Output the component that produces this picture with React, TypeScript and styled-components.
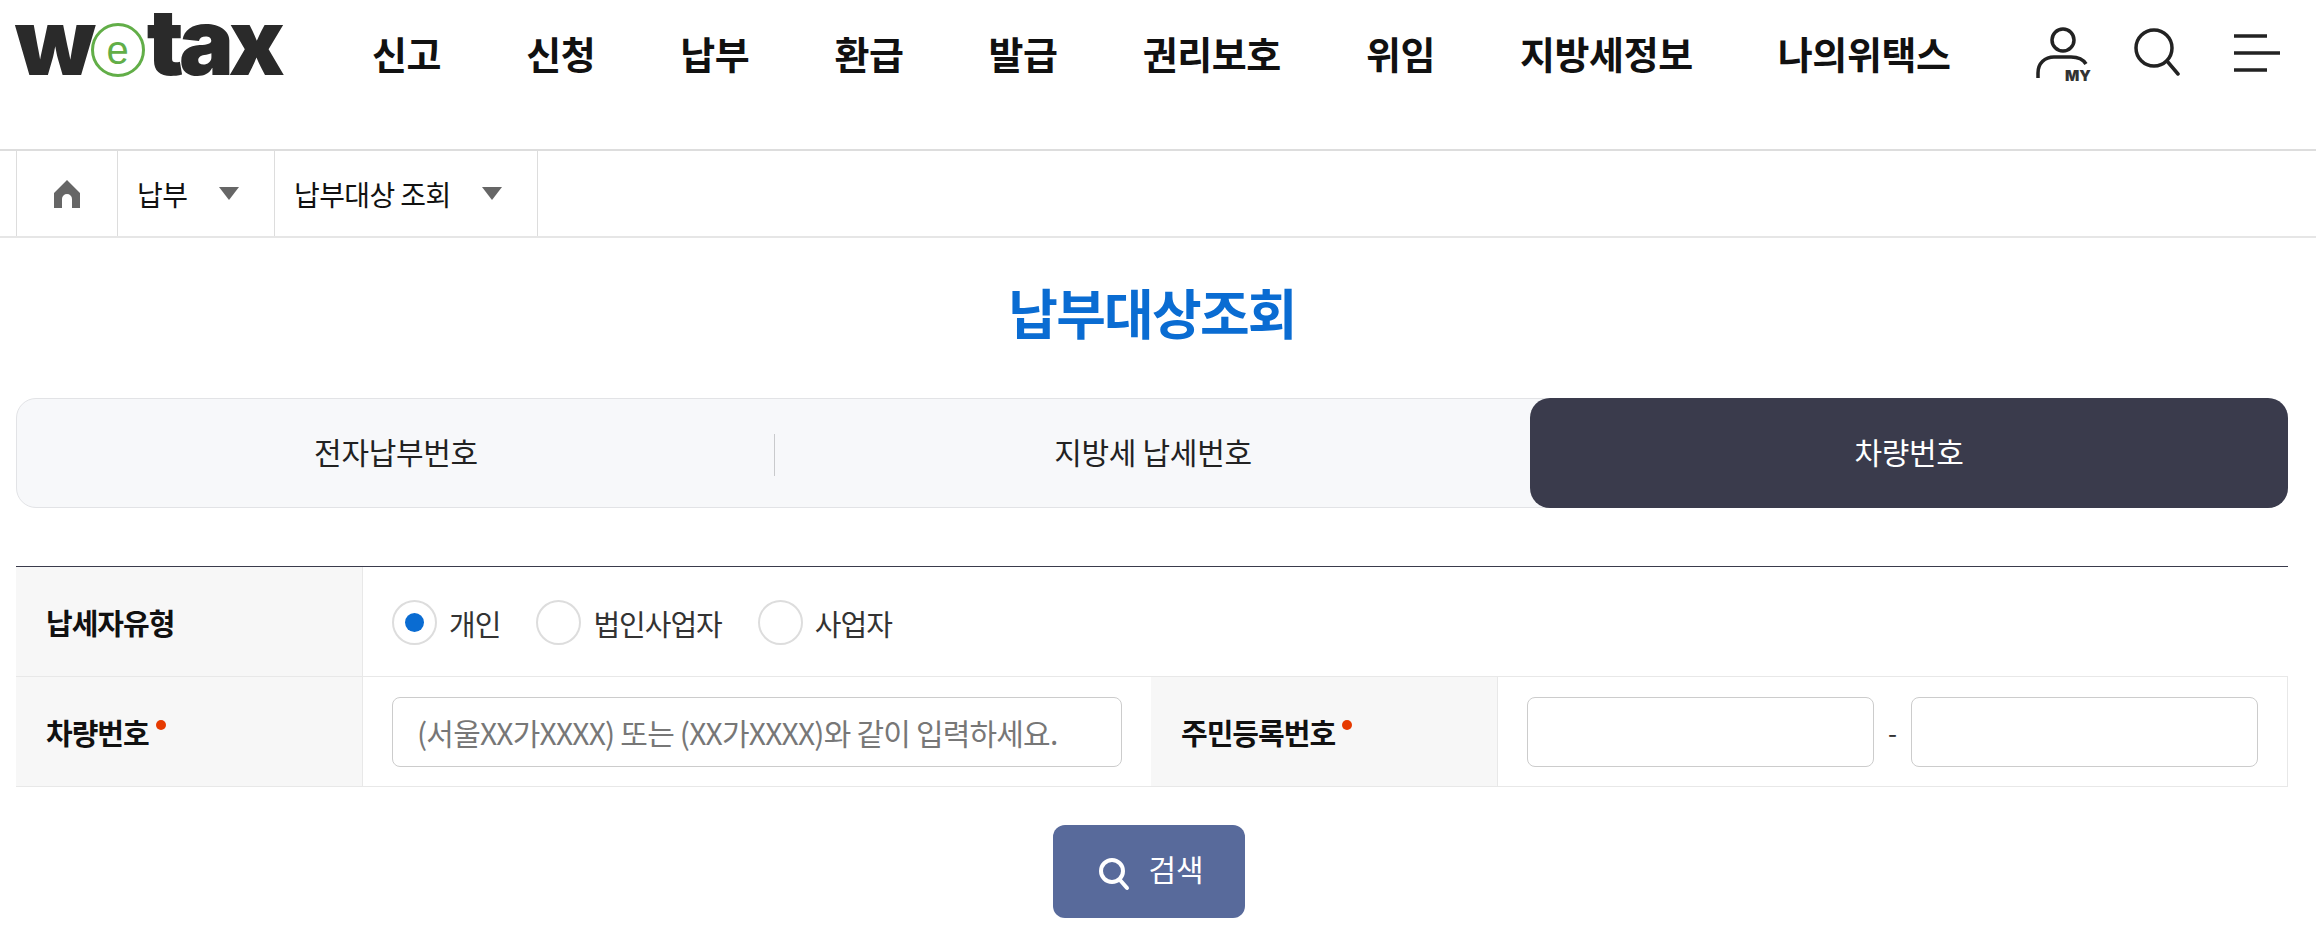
import React from "react";
import styled, { createGlobalStyle } from "styled-components";

const GlobalStyle = createGlobalStyle`
  html, body {
    margin: 0;
    padding: 0;
    background: #fff;
    font-family: "Noto Sans CJK KR", "Noto Sans", sans-serif;
    color: #111;
  }
  * { box-sizing: border-box; }
`;

const navItems = ["신고", "신청", "납부", "환급", "발급", "권리보호", "위임", "지방세정보", "나의위택스"];

const UserIcon = () => (
  <svg width="56" height="60" viewBox="0 0 56 60" fill="none">
    <circle cx="27" cy="13" r="11" stroke="#222" strokeWidth="3.5" />
    <path d="M2 51v-5c0-10 7-16 16-16h17c7 0 12 2 15 7" stroke="#222" strokeWidth="3.5" />
    <text x="29" y="54" fontSize="15" fontWeight="900" fontFamily="Inter, sans-serif" fill="#333">MY</text>
  </svg>
);

const SearchIcon = () => (
  <svg width="46" height="50" viewBox="0 0 46 50" fill="none">
    <circle cx="20" cy="21" r="18" stroke="#222" strokeWidth="3.5" />
    <path d="M33 34l11 13" stroke="#222" strokeWidth="3.5" strokeLinecap="round" />
  </svg>
);

const MenuIcon = () => (
  <svg width="48" height="38" viewBox="0 0 48 38" fill="none">
    <path d="M0 2h33M0 19h46M0 36h33" stroke="#222" strokeWidth="3.5" />
  </svg>
);

const HomeIcon = () => (
  <svg width="26" height="28" viewBox="0 0 26 28" fill="#666">
    <path d="M13 0L26 13v15h-8v-9a5 5 0 0 0-10 0v9H0V13z" />
  </svg>
);

const ButtonSearchIcon = () => (
  <svg width="32" height="34" viewBox="0 0 32 34" fill="none">
    <circle cx="14" cy="14" r="11" stroke="#fff" strokeWidth="4" />
    <path d="M22 23l7 8" stroke="#fff" strokeWidth="4" strokeLinecap="round" />
  </svg>
);

export default function App() {
  return (
    <>
      <GlobalStyle />
      <Page>
        <Header>
          <Logo>
            w
            <LogoE>
              <span>e</span>
            </LogoE>
            tax
          </Logo>
          <Nav>
            {navItems.map((item) => (
              <NavItem key={item}>{item}</NavItem>
            ))}
          </Nav>
          <Utils>
            <UserIcon />
            <SearchIcon />
            <MenuSlot>
              <MenuIcon />
            </MenuSlot>
          </Utils>
        </Header>

        <Breadcrumb>
          <HomeCell>
            <HomeIcon />
          </HomeCell>
          <CrumbCell $width={157}>
            납부
            <Caret />
          </CrumbCell>
          <CrumbCell $width={264}>
            납부대상 조회
            <Caret />
          </CrumbCell>
        </Breadcrumb>

        <Main>
          <Title>납부대상조회</Title>

          <Tabs>
            <Tab $divider>전자납부번호</Tab>
            <Tab>지방세 납세번호</Tab>
            <Tab $active>차량번호</Tab>
          </Tabs>

          <FormTable>
            <Row>
              <Th>납세자유형</Th>
              <RadioCell>
                <RadioLabel>
                  <Radio $checked />
                  개인
                </RadioLabel>
                <RadioLabel>
                  <Radio />
                  법인사업자
                </RadioLabel>
                <RadioLabel>
                  <Radio />
                  사업자
                </RadioLabel>
              </RadioCell>
            </Row>
            <Row>
              <Th>
                차량번호<Required />
              </Th>
              <Td $width={788}>
                <TextInput placeholder="(서울XX가XXXX) 또는 (XX가XXXX)와 같이 입력하세요." readOnly />
              </Td>
              <Th>
                주민등록번호<Required />
              </Th>
              <IdCell>
                <TextInput readOnly />
                <Dash>-</Dash>
                <TextInput readOnly />
              </IdCell>
            </Row>
          </FormTable>

          <ButtonRow>
            <SearchButton>
              <ButtonSearchIcon />
              <span>검색</span>
            </SearchButton>
          </ButtonRow>
        </Main>
      </Page>
    </>
  );
}

const Page = styled.div`
  width: 2316px;
  height: 930px;
  overflow: hidden;
`;

const Header = styled.header`
  height: 151px;
  border-bottom: 2px solid #ddd;
  display: flex;
  align-items: flex-start;
  padding: 15px 34px 0 15px;
`;

const Logo = styled.div`
  width: 266px;
  height: 80px;
  margin-top: -13px;
  display: flex;
  align-items: flex-start;
  font-family: Inter, sans-serif;
  font-weight: 900;
  font-size: 92px;
  line-height: 80px;
  letter-spacing: -5px;
  color: #2a2a2a;
`;

const LogoE = styled.span`
  width: 54px;
  height: 54px;
  margin: 21px 2px 0 0;
  flex: none;
  border: 3px solid #62ae48;
  border-radius: 50%;
  display: flex;
  align-items: center;
  justify-content: center;
  color: #62ae48;
  font-family: "Liberation Sans", sans-serif;
  font-size: 40px;
  line-height: 44px;
  font-weight: 400;
  letter-spacing: 0;
`;

const Nav = styled.nav`
  display: flex;
  gap: 85px;
  margin-left: 91px;
  padding-top: 10px;
`;

const NavItem = styled.a`
  font-size: 38px;
  line-height: 56px;
  font-weight: 700;
  letter-spacing: -0.4px;
  color: #111;
  white-space: nowrap;
`;

const Utils = styled.div`
  margin-left: auto;
  display: flex;
  align-items: flex-start;
  gap: 42px;
  padding-top: 12px;
`;

const MenuSlot = styled.div`
  padding-top: 7px;
  margin-left: 12px;
`;

const Breadcrumb = styled.div`
  height: 87px;
  border-bottom: 2px solid #e6e6e6;
  padding-left: 16px;
  display: flex;
`;

const HomeCell = styled.div`
  width: 101px;
  border-left: 1px solid #ddd;
  display: flex;
  align-items: center;
  justify-content: center;
`;

const CrumbCell = styled.div<{ $width: number }>`
  width: ${(p) => p.$width}px;
  border-left: 1px solid #ddd;
  padding-left: 19px;
  display: flex;
  align-items: center;
  font-size: 28px;
  letter-spacing: -0.6px;
  color: #111;
  &:last-child {
    border-right: 1px solid #ddd;
  }
`;

const Caret = styled.i`
  margin-left: auto;
  margin-right: 35px;
  width: 0;
  height: 0;
  border-left: 10px solid transparent;
  border-right: 10px solid transparent;
  border-top: 13px solid #666;
`;

const Main = styled.main`
  padding: 0 28px 0 16px;
`;

const Title = styled.h1`
  margin: 0;
  height: 160px;
  padding-top: 32px;
  text-align: center;
  font-size: 54px;
  line-height: 84px;
  font-weight: 700;
  letter-spacing: -1.8px;
  color: #0a6cd2;
`;

const Tabs = styled.div`
  height: 110px;
  background: #f7f8fa;
  border: 1px solid #e2e3e6;
  border-radius: 20px;
  display: grid;
  grid-template-columns: 758px 756px 1fr;
`;

const Tab = styled.div<{ $active?: boolean; $divider?: boolean }>`
  position: relative;
  display: flex;
  align-items: center;
  justify-content: center;
  padding-bottom: 4px;
  font-size: 30px;
  letter-spacing: -0.3px;
  color: ${(p) => (p.$active ? "#fff" : "#222")};
  background: ${(p) => (p.$active ? "#3a3b4c" : "transparent")};
  border-radius: ${(p) => (p.$active ? "20px" : "0")};
  margin: ${(p) => (p.$active ? "-1px" : "0")};
  ${(p) =>
    p.$divider &&
    `&::after {
      content: "";
      position: absolute;
      right: 0;
      top: 35px;
      height: 42px;
      width: 1px;
      background: #c9cacc;
    }`}
`;

const FormTable = styled.div`
  margin-top: 58px;
  border-top: 1px solid #3a3b4c;
`;

const Row = styled.div`
  height: 110px;
  display: flex;
  border-bottom: 1px solid #e8e8e8;
`;

const Th = styled.div`
  width: 347px;
  flex: none;
  background: #f7f7f7;
  border-right: 1px solid #e8e8e8;
  padding-left: 30px;
  display: flex;
  align-items: center;
  font-size: 29px;
  font-weight: 700;
  letter-spacing: -1px;
  color: #111;
`;

const Required = styled.i`
  width: 10px;
  height: 10px;
  margin: -14px 0 0 7px;
  border-radius: 50%;
  background: #e63a00;
`;

const Td = styled.div<{ $width?: number }>`
  width: ${(p) => p.$width}px;
  flex: none;
  padding: 0 29px;
  display: flex;
  align-items: center;
`;

const RadioCell = styled.div`
  flex: 1;
  padding: 2px 0 0 29px;
  display: flex;
  align-items: center;
  gap: 36px;
`;

const RadioLabel = styled.label`
  display: flex;
  align-items: center;
  gap: 12px;
  font-size: 29px;
  letter-spacing: -1px;
  color: #333;
`;

const Radio = styled.span<{ $checked?: boolean }>`
  width: 45px;
  height: 45px;
  border: 2px solid #ddd;
  border-radius: 50%;
  background: #fff;
  position: relative;
  ${(p) =>
    p.$checked &&
    `&::after {
      content: "";
      position: absolute;
      left: 11px;
      top: 11px;
      width: 19px;
      height: 19px;
      border-radius: 50%;
      background: #0a6cd2;
    }`}
`;

const TextInput = styled.input`
  flex: 1;
  min-width: 0;
  width: 100%;
  height: 70px;
  border: 1px solid #ccc;
  border-radius: 8px;
  padding: 0 24px;
  background: #fff;
  font-family: inherit;
  font-size: 30px;
  letter-spacing: -0.8px;
  outline: none;
  &::placeholder {
    color: #777;
    opacity: 1;
  }
`;

const IdCell = styled.div`
  flex: 1;
  padding: 0 29px;
  border-right: 1px solid #e8e8e8;
  display: flex;
  align-items: center;
  gap: 14px;
`;

const Dash = styled.span`
  font-size: 26px;
  color: #333;
`;

const ButtonRow = styled.div`
  margin-top: 38px;
  padding-right: 6px;
  display: flex;
  justify-content: center;
`;

const SearchButton = styled.button`
  width: 192px;
  height: 93px;
  border: 0;
  border-radius: 12px;
  padding: 0 0 0 4px;
  background: #586a9b;
  color: #fff;
  font-family: inherit;
  font-size: 30px;
  display: flex;
  align-items: center;
  justify-content: center;
  gap: 18px;
  svg {
    margin-top: 4px;
  }
  span {
    margin-bottom: 7px;
  }
`;
